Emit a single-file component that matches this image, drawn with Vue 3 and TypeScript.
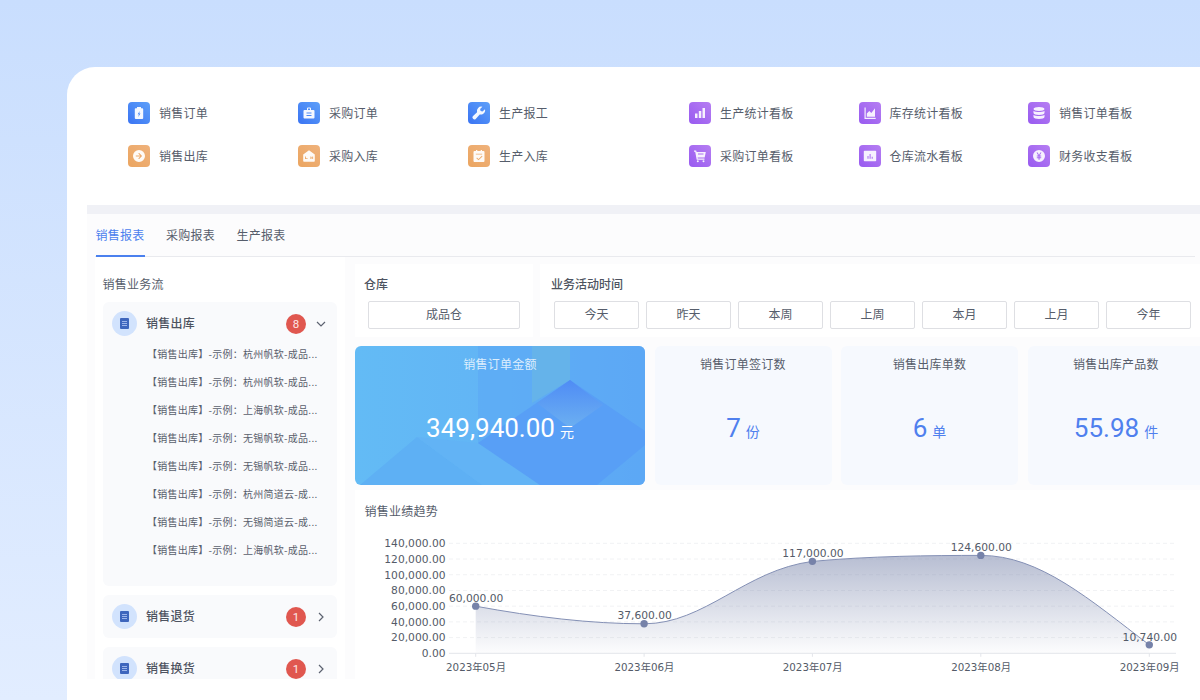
<script setup lang="ts">
interface Shortcut {
  label: string
  path: string
}

// 快捷入口图标 (22x22 画布)
const clip = 'M8 6.2h1V5h4v1.2h1.2a1 1 0 0 1 1 1V16a1 1 0 0 1-1 1H7.8a1 1 0 0 1-1-1V7.2a1 1 0 0 1 1.2-1z'

const blue: Shortcut[] = [
  { label: '销售订单', path: clip + 'M11.8 9 9.6 12.3h1.3l-.6 2.6 2.2-3.4h-1.3z' },
  { label: '采购订单', path: 'M6.5 8H9V6.4a1 1 0 0 1 1-1h2a1 1 0 0 1 1 1V8h2.5a1 1 0 0 1 1 1v6.5a1 1 0 0 1-1 1h-9a1 1 0 0 1-1-1V9a1 1 0 0 1 1-1zM10 6.4V8h2V6.4zM8.5 10.6v1h5v-1zM8.5 13v1h5v-1z' },
  { label: '生产报工', path: 'M17 7.2l-2.500 2.300-1.900-.5-.5-1.900 2.300-2.300a4.300 4.300 0 0 0-5.300 5.400L4.800 14.200a2 2 0 0 0 2.900 2.700l4-4.500a4.300 4.300 0 0 0 5.300-5.200z' }
]

const orange: Shortcut[] = [
  { label: '销售出库', path: 'M11 5a6 6 0 1 1 0 12 6 6 0 0 1 0-12zM11 7.800l-.7.700 1.800 1.900H7.800v1.200h4.300l-1.800 1.900.7.700 3.100-3.200z' },
  { label: '采购入库', path: 'M11 5.200l5.800 4.300V16a.8.8 0 0 1-.8.800H6a.8.8 0 0 1-.8-.8V9.500zM7 11.500v2.600h2.600v-.8H7.900v-1.800zM12.400 11.500v2.600h.9v-.9h1v.9h.8v-2.600h-.8v.9h-1v-.9z' },
  { label: '生产入库', path: 'M6.500 6H8V5h1.300v1h3.400V5H14v1h1.500a1 1 0 0 1 1 1v9a1 1 0 0 1-1 1h-9a1 1 0 0 1-1-1V7a1 1 0 0 1 1-1zM7.800 8.800v.8h6.400v-.8zM13.800 10.800l-3.300 3.100-1.500-1.400-.7.700 2.200 2.100 4-3.800z' }
]

const purple: Shortcut[] = [
  { label: '生产统计看板', path: 'M6 11.500h2.500V16H6zM9.800 9h2.500v7H9.800zM13.500 6h2.500v10h-2.500z' },
  { label: '库存统计看板', path: 'M5.500 5.500h1.200v10.300h10V17H5.500zM7.800 14.800v-3.200l2.500-2.700 2 2.200 3.700-4.800v8.500z' },
  { label: '销售订单看板', path: 'M11 5c3 0 5.500.8 5.500 2S14 9 11 9 5.500 8.200 5.500 7 8 5 11 5zM5.500 8.700C6.800 9.700 9 10 11 10s4.200-.3 5.500-1.300V11c0 1.200-2.500 2-5.500 2s-5.500-.8-5.500-2zM5.500 12.800c1.300 1 3.500 1.300 5.500 1.300s4.200-.3 5.500-1.300V15c0 1.200-2.500 2-5.500 2s-5.500-.8-5.500-2z' },
  { label: '采购订单看板', path: 'M5 5.500h2.200l.4 1.500h9.200l-1.100 5.500H8.600l.2 1h6.700v1.200H7.700L6.200 6.700H5zM9 8.600v1h5.500v-1zM8.800 15.200a1 1 0 1 1 0 2 1 1 0 0 1 0-2zM14.500 15.200a1 1 0 1 1 0 2 1 1 0 0 1 0-2z' },
  { label: '仓库流水看板', path: 'M5.500 5.800h11a.7.7 0 0 1 .7.7v9a.7.7 0 0 1-.7.7h-11a.7.7 0 0 1-.7-.7v-9a.7.7 0 0 1 .7-.7zM8.500 11v2.800h1V11zM10.600 9v4.800h1V9zM12.700 11.800v2h1v-2z' },
  { label: '财务收支看板', path: 'M11 5a6 6 0 1 1 0 12 6 6 0 0 1 0-12zM8.500 7.500l1.800 3H8.800v1h1.700v.7H8.800v1h1.700v1.500h1.100v-1.500h1.600v-1h-1.600v-.7h1.600v-1h-1.500l1.800-3h-1.200L11 10l-1.300-2.500z' }
]

const orderItems: string[] = [
  '【销售出库】-示例：杭州帆软-成品...',
  '【销售出库】-示例：杭州帆软-成品...',
  '【销售出库】-示例：上海帆软-成品...',
  '【销售出库】-示例：无锡帆软-成品...',
  '【销售出库】-示例：无锡帆软-成品...',
  '【销售出库】-示例：杭州简道云-成...',
  '【销售出库】-示例：无锡简道云-成...',
  '【销售出库】-示例：上海帆软-成品...'
]

const periods = ['今天', '昨天', '本周', '上周', '本月', '上月', '今年']

const stats = [
  { title: '销售订单签订数', value: '7', unit: '份' },
  { title: '销售出库单数', value: '6', unit: '单' },
  { title: '销售出库产品数', value: '55.98', unit: '件' }
]

// 折线图坐标,viewBox 与页面坐标一致
const y0 = 653.3
const yOf = (v: number) => y0 - (v / 140000) * 110
const ticks = [0, 20000, 40000, 60000, 80000, 100000, 120000, 140000]
const fmt = (v: number) =>
  v.toLocaleString('en-US', { minimumFractionDigits: 2, maximumFractionDigits: 2 })

const points = [
  { x: 475.7, v: 60000, month: '2023年05月' },
  { x: 644.1, v: 37600, month: '2023年06月' },
  { x: 812.4, v: 117000, month: '2023年07月' },
  { x: 980.8, v: 124600, month: '2023年08月' },
  { x: 1149.3, v: 10740, month: '2023年09月' }
]

const line =
  'M475.7 606.2C535 617 590 623.800 644.100 623.800C705 623.800 745 570 812.400 561.400C870 556 930 555.400 980.800 555.400C1040 555.400 1090 600 1149.300 644.900'
const area = line + `L1149.300 ${y0}L475.700 ${y0}Z`
</script>

<template>
  <div class="page">
    <div class="card">
      <section class="shortcuts">
        <div class="shortcut-grid">
          <div v-for="s in blue" :key="s.label" class="shortcut">
            <svg class="tile" viewBox="0 0 22 22">
              <rect width="22" height="22" rx="4" fill="url(#tile-blue)" />
              <path :d="s.path" fill="#fff" fill-opacity=".94" fill-rule="evenodd" />
            </svg>
            <span>{{ s.label }}</span>
          </div>
          <div v-for="s in orange" :key="s.label" class="shortcut">
            <svg class="tile" viewBox="0 0 22 22">
              <rect width="22" height="22" rx="4" fill="url(#tile-orange)" />
              <path :d="s.path" fill="#fff" fill-opacity=".94" fill-rule="evenodd" />
            </svg>
            <span>{{ s.label }}</span>
          </div>
        </div>
        <div class="shortcut-grid right">
          <div v-for="s in purple" :key="s.label" class="shortcut">
            <svg class="tile" viewBox="0 0 22 22">
              <rect width="22" height="22" rx="4" fill="url(#tile-purple)" />
              <path :d="s.path" fill="#fff" fill-opacity=".9" fill-rule="evenodd" />
            </svg>
            <span>{{ s.label }}</span>
          </div>
        </div>
        <svg class="defs" width="0" height="0">
          <defs>
            <linearGradient id="tile-blue" x1="0" y1="1" x2="1" y2="0">
              <stop offset="0" stop-color="#3a74f3" />
              <stop offset="1" stop-color="#5ea0f9" />
            </linearGradient>
            <linearGradient id="tile-orange" x1="0" y1="1" x2="1" y2="0">
              <stop offset="0" stop-color="#eba560" />
              <stop offset="1" stop-color="#efb27c" />
            </linearGradient>
            <linearGradient id="tile-purple" x1="0" y1="1" x2="1" y2="0">
              <stop offset="0" stop-color="#985af0" />
              <stop offset="1" stop-color="#b67ef2" />
            </linearGradient>
          </defs>
        </svg>
      </section>

      <div class="divider"></div>

      <section class="board">
        <nav class="tabs">
          <a class="tab active">销售报表</a>
          <a class="tab">采购报表</a>
          <a class="tab">生产报表</a>
        </nav>

        <div class="board-body">
          <aside class="flow">
            <h3 class="flow-title">销售业务流</h3>

            <div class="group open">
              <div class="group-head">
                <span class="doc"><i></i></span>
                <b>销售出库</b>
                <em class="badge">8</em>
                <svg class="chev" viewBox="0 0 12 12"><path d="M2 4l4 4 4-4" /></svg>
              </div>
              <ul class="items">
                <li v-for="(it, i) in orderItems" :key="i">{{ it }}</li>
              </ul>
            </div>

            <div class="group">
              <div class="group-head">
                <span class="doc"><i></i></span>
                <b>销售退货</b>
                <em class="badge">1</em>
                <svg class="chev" viewBox="0 0 12 12"><path d="M4 2l4 4-4 4" /></svg>
              </div>
            </div>

            <div class="group">
              <div class="group-head">
                <span class="doc"><i></i></span>
                <b>销售换货</b>
                <em class="badge">1</em>
                <svg class="chev" viewBox="0 0 12 12"><path d="M4 2l4 4-4 4" /></svg>
              </div>
            </div>
          </aside>

          <main class="main">
            <div class="filters">
              <div class="filter store">
                <label>仓库</label>
                <div class="options"><button class="store-btn">成品仓</button></div>
              </div>
              <div class="filter time">
                <label>业务活动时间</label>
                <div class="options">
                  <button v-for="p in periods" :key="p">{{ p }}</button>
                </div>
              </div>
            </div>

            <div class="stats">
              <div class="stat hero">
                <svg class="hero-bg" viewBox="0 0 290 139" preserveAspectRatio="none">
                  <defs>
                    <linearGradient id="dia" x1="0" y1="0" x2="0" y2="1">
                      <stop offset="0" stop-color="#4f8cf5" />
                      <stop offset="1" stop-color="#6cb0f1" />
                    </linearGradient>
                  </defs>
                  <polygon points="123,0 290,0 290,139 123,139" fill="#5ca8f5" opacity=".6" />
                  <polygon points="5,139 62,91 127,139" fill="#5eb0f4" />
                  <polygon points="62,91 123,97 185,139 127,139" fill="#62b3f5" />
                  <polygon points="123,97 215,34 290,85 290,99 242,139 185,139" fill="#589ff6" />
                  <polygon points="177,0 215,0 215,34 177,57" fill="#68b6e6" opacity=".75" />
                  <polygon points="215,34 248,59 215,82 182,57" fill="url(#dia)" />
                </svg>
                <div class="stat-title">销售订单金额</div>
                <div class="stat-value">349,940.00<small>元</small></div>
              </div>
              <div v-for="s in stats" :key="s.title" class="stat">
                <div class="stat-title">{{ s.title }}</div>
                <div class="stat-value">{{ s.value }}<small>{{ s.unit }}</small></div>
              </div>
            </div>

            <div class="trend">
              <h3 class="trend-title">销售业绩趋势</h3>
              <svg class="chart" viewBox="355 530 845 150">
                <defs>
                  <linearGradient id="area-fill" x1="0" y1="555" x2="0" y2="653" gradientUnits="userSpaceOnUse">
                    <stop offset="0" stop-color="#6f7ca5" stop-opacity=".5" />
                    <stop offset="1" stop-color="#6f7ca5" stop-opacity=".02" />
                  </linearGradient>
                </defs>
                <g v-for="t in ticks" :key="t">
                  <line
                    v-if="t > 0"
                    x1="449"
                    x2="1176"
                    :y1="yOf(t)"
                    :y2="yOf(t)"
                    class="grid-line"
                  />
                  <text x="445.500" :y="yOf(t) + 3.900" text-anchor="end" class="axis-text">{{ fmt(t) }}</text>
                </g>
                <path :d="area" fill="url(#area-fill)" />
                <line x1="449" x2="1176" :y1="y0" :y2="y0" class="axis-line" />
                <g v-for="p in points" :key="p.month">
                  <line :x1="p.x" :x2="p.x" :y1="y0" :y2="y0 + 3.500" class="axis-line" />
                  <text :x="p.x + 0.300" y="671" text-anchor="middle" class="axis-text month">{{ p.month }}</text>
                </g>
                <path :d="line" class="trend-line" />
                <g v-for="p in points" :key="p.v">
                  <circle :cx="p.x" :cy="yOf(p.v)" r="3.700" fill="#7682a9" />
                  <text :x="p.x + 0.500" :y="yOf(p.v) - 4.300" text-anchor="middle" class="axis-text">{{ fmt(p.v) }}</text>
                </g>
              </svg>
            </div>
          </main>
        </div>
      </section>
    </div>
  </div>
</template>

<style>
html,
body {
  margin: 0;
  background: #d6e6ff;
}
</style>

<style scoped>
.page {
  width: 1200px;
  height: 700px;
  overflow: hidden;
  box-sizing: border-box;
  padding: 67px 0 0 67px;
  background: linear-gradient(180deg, #c9defe 0%, #e2edff 100%);
  font-family: "Noto Sans CJK SC", "Noto Sans", sans-serif;
  color: #565d6b;
}

.card {
  width: 1133px;
  height: 633px;
  background: #fff;
  border-radius: 28px 0 0 0;
  overflow: hidden;
}

/* 快捷入口 */
.shortcuts {
  height: 138px;
  box-sizing: border-box;
  padding: 35px 0 0 61px;
  display: flex;
  gap: 51px;
}

.shortcut-grid {
  display: grid;
  grid-template-columns: repeat(3, 170px);
  grid-auto-rows: 22px;
  row-gap: 21px;
}

.shortcut-grid.right {
  grid-template-columns: repeat(3, 169.5px);
}

.shortcut {
  display: flex;
  align-items: center;
  gap: 9px;
  font-size: 12px;
  letter-spacing: 0.25px;
}

.shortcut span {
  padding-bottom: 2px;
}

.tile {
  width: 22px;
  height: 22px;
  flex: none;
}

.defs {
  position: absolute;
}

.divider {
  height: 9px;
  margin-left: 20px;
  background: #f0f1f6;
}

/* 报表区 */
.board {
  height: 465px;
  margin-left: 20px;
  overflow: hidden;
  background: #fcfcfd;
}

.tabs {
  width: 1100px;
  height: 43px;
  box-sizing: border-box;
  margin-left: 8px;
  padding-left: 0.5px;
  display: flex;
  gap: 21.500px;
  border-bottom: 1px solid #e9eaee;
}

.tab {
  height: 43px;
  box-sizing: border-box;
  line-height: 41px;
  font-size: 12px;
  letter-spacing: 0.25px;
  color: #565d6b;
}

.tab.active {
  color: #4a80ee;
  border-bottom: 2px solid #4a80ee;
}

.board-body {
  display: flex;
  padding-left: 8px;
  gap: 10px;
}

.flow {
  width: 250px;
  height: 422px;
  flex: none;
  box-sizing: border-box;
  padding: 18px 8px 0;
  overflow: hidden;
  background: #fff;
}

.flow-title {
  margin: 0 0 9px -0.5px;
  font-size: 12px;
  line-height: 18px;
  font-weight: 400;
  letter-spacing: 0.25px;
}

.group {
  background: #f9fafc;
  border-radius: 6px;
  margin-bottom: 9px;
}

.group.open {
  padding-bottom: 22px;
}

.group-head {
  height: 43px;
  display: flex;
  align-items: center;
  padding: 0 10px 0 9px;
  font-size: 12px;
}

.group-head b {
  flex: 1;
  margin-left: 9px;
  padding-bottom: 2px;
  font-weight: 500;
  letter-spacing: 0.25px;
  color: #4d5360;
}

.doc {
  width: 25px;
  height: 25px;
  flex: none;
  border-radius: 50%;
  background: #d2e3fd;
  display: flex;
  align-items: center;
  justify-content: center;
}

.doc i {
  width: 9px;
  height: 11px;
  border-radius: 1px;
  background: linear-gradient(#9db5ea, #9db5ea) 2px 3px / 5px 1px no-repeat,
    linear-gradient(#9db5ea, #9db5ea) 2px 5px / 5px 1px no-repeat,
    linear-gradient(#9db5ea, #9db5ea) 2px 7px / 5px 1px no-repeat, #3e66bd;
}

.badge {
  width: 20px;
  height: 20px;
  border-radius: 50%;
  background: #e0574f;
  color: #fde9e7;
  font-style: normal;
  font-size: 11.500px;
  line-height: 20px;
  text-align: center;
  font-family: Roboto, sans-serif;
}

.chev {
  width: 12px;
  height: 12px;
  margin-left: 9px;
  fill: none;
  stroke: #5c6270;
  stroke-width: 1.200;
}

.items {
  list-style: none;
  margin: -5px 0 0;
  padding: 0 0 0 44px;
  font-size: 10px;
  letter-spacing: 0.26px;
}

.items li {
  height: 28px;
  line-height: 28px;
  white-space: nowrap;
  color: #5a606c;
}

.main {
  flex: none;
  width: 845px;
  padding-top: 7px;
}

.filters {
  display: flex;
  gap: 7px;
  height: 73px;
}

.filter {
  background: #fff;
  box-sizing: border-box;
  padding-top: 4px;
}

.filter label {
  display: block;
  margin-top: 7px;
  font-size: 12px;
  line-height: 18px;
  font-weight: 500;
  color: #4d5360;
}

.store {
  width: 178px;
  padding-left: 9px;
}

.time {
  flex: 1;
  padding-left: 11px;
}

.options {
  display: flex;
  gap: 7px;
  margin: 8px 0 0 3px;
}

.store .options {
  margin-left: 4px;
}

.options button {
  width: 85px;
  height: 28px;
  padding: 0 0 3px;
  box-sizing: border-box;
  border: 1px solid #dedfe3;
  border-radius: 2px;
  background: #fff;
  font: inherit;
  font-size: 12px;
  color: #565d6b;
}

.options .store-btn {
  width: 152px;
}

.stats {
  display: flex;
  gap: 9.500px;
  margin-top: 9px;
}

.stat {
  position: relative;
  width: 177px;
  height: 139px;
  flex: none;
  overflow: hidden;
  border-radius: 6px;
  background: #f6f9fe;
  text-align: center;
}

.stat-title {
  position: relative;
  margin-top: 9px;
  font-size: 12px;
  line-height: 18px;
  letter-spacing: 0.25px;
}

.stat-value {
  position: relative;
  margin-top: 35px;
  line-height: 40px;
  font-family: Roboto, "Noto Sans CJK SC", sans-serif;
  font-size: 26px;
  color: #4f80ee;
}

.stat-value small {
  margin-left: 5px;
  font-size: 14px;
  font-family: "Noto Sans CJK SC", sans-serif;
}

.hero {
  width: 290px;
  background: linear-gradient(90deg, #63bbf5 0%, #62b5f5 45%, #5ea8f5 100%);
}

.hero .stat-title {
  color: #dceefd;
}

.hero .stat-value {
  color: #fff;
}

.hero-bg {
  position: absolute;
  inset: 0;
  width: 100%;
  height: 100%;
}

.trend {
  height: 195px;
  margin-top: 5px;
  background: #fff;
  overflow: hidden;
}

.trend-title {
  margin: 12px 0 0 9.500px;
  font-size: 12px;
  line-height: 18px;
  font-weight: 400;
  letter-spacing: 0.25px;
}

.chart {
  display: block;
  width: 845px;
  height: 150px;
  margin-top: 10px;
}

.grid-line {
  stroke: #f1f2f4;
  stroke-width: 1;
  stroke-dasharray: 4 3;
}

.axis-line {
  stroke: #e3e5ea;
  stroke-width: 1;
}

.axis-text {
  font-family: "DejaVu Sans", "Noto Sans CJK SC", sans-serif;
  font-size: 10.700px;
  fill: #545b68;
}

.axis-text.month {
  font-size: 10.300px;
}

.trend-line {
  fill: none;
  stroke: #8490b5;
  stroke-width: 1;
}
</style>
